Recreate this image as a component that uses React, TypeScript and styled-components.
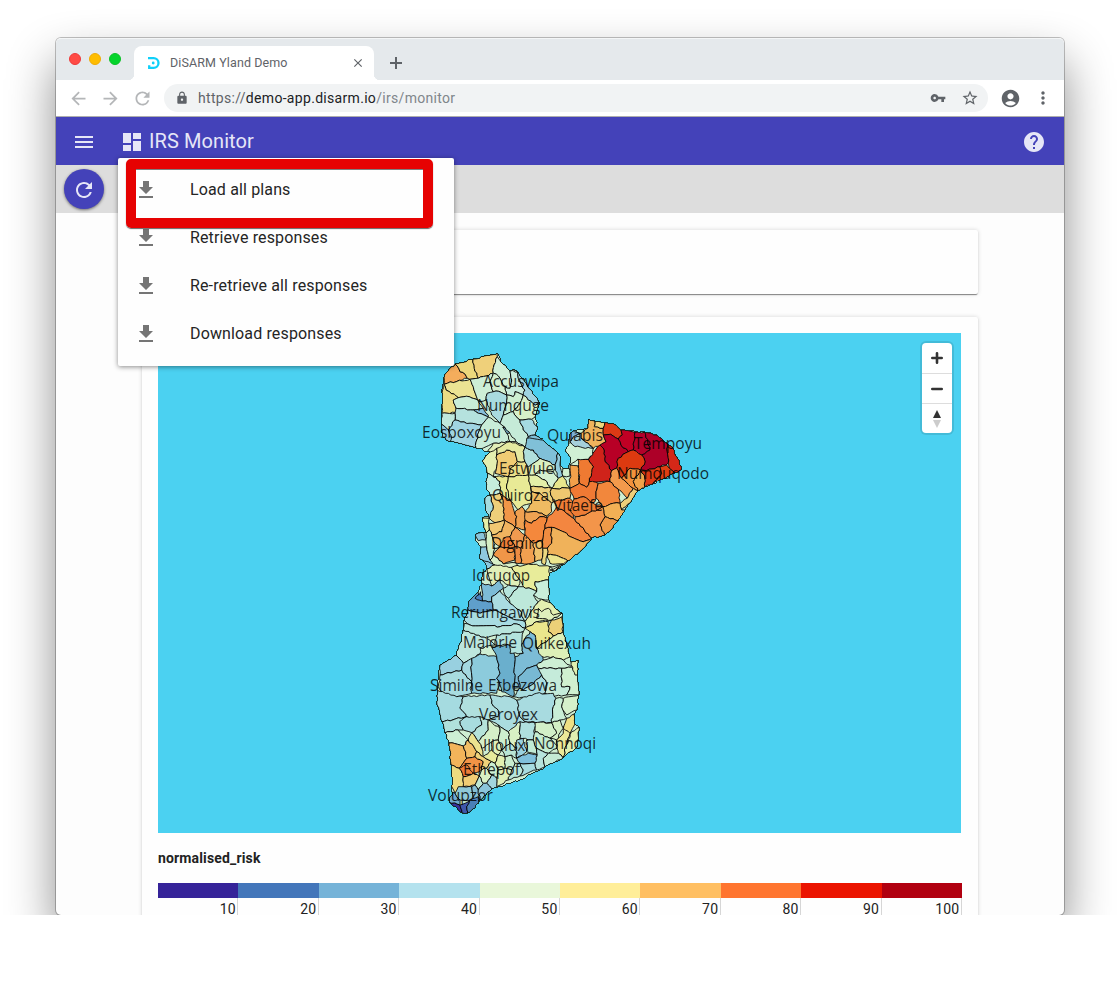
import React from "react";
import styled, { createGlobalStyle } from "styled-components";
import {
  MdAccountCircle,
  MdArrowBack,
  MdArrowForward,
  MdClose,
  MdDashboard,
  MdHelp,
  MdLock,
  MdMenu,
  MdMoreVert,
  MdRefresh,
  MdStarBorder,
  MdVpnKey,
} from "react-icons/md";

const GlobalStyle = createGlobalStyle`
  * { box-sizing: border-box; }
  body { margin: 0; background: #fff; font-family: Roboto, "Liberation Sans", sans-serif; }
  svg { display: block; flex: none; }
`;

const Stage = styled.div`
  height: 915px;
  padding: 38px 56px 0;
  overflow: hidden;
`;
const Window = styled.div`
  position: relative;
  display: flex;
  flex-direction: column;
  width: 1008px;
  height: 877px;
  border-radius: 5px;
  background: #fdfdfd;
  box-shadow: 0 0 0 1px rgba(0, 0, 0, 0.24), 0 24px 48px rgba(0, 0, 0, 0.46);
`;
const TabStrip = styled.div`
  display: flex;
  height: 42px;
  padding-left: 13px;
  border-top: 1px solid #f4f6f7;
  border-radius: 5px 5px 0 0;
  background: #e5e9ec;
`;
const Lights = styled.div`
  display: flex;
  gap: 8px;
  width: 65px;
  padding-top: 14px;
`;
const Light = styled.span<{ $fill: string; $rim: string }>`
  width: 12px;
  height: 12px;
  border-radius: 50%;
  background: ${(p) => p.$fill};
  border: 1px solid ${(p) => p.$rim};
`;
const Tab = styled.div`
  position: relative;
  display: flex;
  align-items: center;
  width: 240px;
  height: 34px;
  margin-top: 7px;
  padding: 0 9px 1px 14px;
  border-radius: 8px 8px 0 0;
  background: #fff;
  &::before,
  &::after {
    content: "";
    position: absolute;
    bottom: 0;
    width: 6px;
    height: 6px;
  }
  &::before {
    left: -6px;
    background: radial-gradient(circle at 0 0, transparent 6px, #fff 6.5px);
  }
  &::after {
    right: -6px;
    background: radial-gradient(circle at 100% 0, transparent 6px, #fff 6.5px);
  }
`;
const TabTitle = styled.span`
  flex: 1;
  margin-left: 10px;
  font-size: 12.5px;
  letter-spacing: 0.1px;
  color: #5f6368;
`;
const NewTab = styled.div`
  padding: 18px 0 0 16px;
`;
const Toolbar = styled.div`
  display: flex;
  align-items: center;
  height: 37px;
  padding: 0 11px;
  border-bottom: 1px solid #aeaeae;
  background: #fff;
  color: #5f6368;
`;
const NavButtons = styled.div`
  display: flex;
  gap: 11px;
  width: 97px;
  padding-left: 0.5px;
  color: #b4b6b8;
`;
const Address = styled.div`
  display: flex;
  flex: none;
  align-items: center;
  width: 824px;
  height: 28px;
  padding: 0 9px 0 11px;
  border-radius: 14px;
  background: #f1f3f4;
`;
const Url = styled.span`
  flex: 1;
  margin-left: 9px;
  font-size: 14px;
  letter-spacing: 0.31px;
  color: #5f6368;
`;
const Host = styled.span`
  color: #202124;
`;
const UrlPath = styled.span`
  color: #80868b;
`;
const AddressActions = styled.div`
  display: flex;
  align-items: center;
  gap: 15px;
`;
const BrowserActions = styled.div`
  display: flex;
  flex: none;
  align-items: center;
  gap: 12px;
  margin-left: 11.5px;
`;
const AppBar = styled.header`
  display: flex;
  align-items: center;
  height: 48px;
  padding: 2px 18px 0 16px;
  background: #4442b9;
  color: #e6e6f7;
`;
const AppTitle = styled.h1`
  flex: 1;
  margin: 0 0 2px 5px;
  font-size: 20px;
  font-weight: 400;
  letter-spacing: 0.09px;
`;
const MenuSlot = styled.div`
  width: 48px;
`;
const ActionBar = styled.div`
  height: 48px;
  padding: 4px 8px;
  background: #ddd;
`;
const RoundButton = styled.button`
  display: flex;
  align-items: center;
  justify-content: center;
  width: 40px;
  height: 40px;
  padding: 2px 0 0;
  border: 0;
  border-radius: 50%;
  background: #4442b9;
  color: #e6e6f7;
  box-shadow: 0 1px 3px rgba(0, 0, 0, 0.5);
`;
const Content = styled.main`
  display: flex;
  flex: 1;
  flex-direction: column;
  gap: 23px;
  min-height: 0;
  padding: 17px 86px 0;
  overflow: hidden;
  border-radius: 0 0 5px 5px;
`;
const Card = styled.section<{ $height: number }>`
  flex: none;
  height: ${(p) => p.$height}px;
  padding: 16px;
  border-radius: 2px;
  background: #fefefe;
  box-shadow: 0 2px 1px -1px rgba(0, 0, 0, 0.3), 0 1px 1px rgba(0, 0, 0, 0.2), 0 0 4px rgba(0, 0, 0, 0.16);
`;
const MapFrame = styled.div`
  position: relative;
  width: 803px;
  height: 500px;
  background: #4bd1f1;
`;
const MapControls = styled.div`
  position: absolute;
  top: 10px;
  right: 9px;
  width: 30px;
  border-radius: 4px;
  background: #fff;
  box-shadow: 0 0 0 2px rgba(0, 0, 0, 0.1);
`;
const MapControl = styled.div`
  display: flex;
  align-items: center;
  justify-content: center;
  height: 30px;
  & + & { border-top: 1px solid #ddd; }
`;
const LegendTitle = styled.h2`
  margin: 17px 0 16px;
  font-size: 14px;
  line-height: 17px;
  font-weight: 700;
  letter-spacing: 0.15px;
  color: #222;
`;
const Legend = styled.div`
  display: grid;
  grid-template-columns: repeat(10, 80.4px);
`;
const LegendCell = styled.div<{ $color: string }>`
  height: 42px;
  padding: 6px 2.5px 0 0;
  border-top: 15px solid ${(p) => p.$color};
  background: linear-gradient(#d6d6d6, #d6d6d6) right / 1px 100% no-repeat;
  font-size: 14px;
  line-height: 11px;
  letter-spacing: 0.2px;
  text-align: right;
  color: #222;
`;
const Menu = styled.ul`
  position: absolute;
  top: 120px;
  left: 62px;
  width: 336px;
  height: 208px;
  margin: 0;
  padding: 8px 0;
  border-radius: 2px;
  background: #fefefe;
  box-shadow: 0 1px 5px rgba(0, 0, 0, 0.45);
  list-style: none;
`;
const MenuItem = styled.li`
  display: flex;
  align-items: center;
  gap: 32px;
  height: 48px;
  padding-left: 16px;
  font-size: 16px;
  letter-spacing: 0.14px;
  color: #252525;
`;
const MenuLabel = styled.span`
  padding-bottom: 2px;
`;
const Highlight = styled.div`
  position: absolute;
  top: 121px;
  left: 70px;
  width: 307px;
  height: 69px;
  border: 10px solid #e60202;
  border-radius: 5px;
  box-shadow: 0 1px 1px rgba(0, 0, 0, 0.6), inset 0 1px 0 rgba(0, 0, 0, 0.5);
`;

type Area = [string, string];
type Sheet = { x: number; y: number; areas: Area[] };

// District shapes by map sheet; coordinates are thirds of a pixel from the sheet's corner.
const sheets: Sheet[] = [
  {
    x: 410,
    y: 340,
    areas: [
      ["#f4ad5c", "135,72 150,95 165,102 172,115 148,121 112,130 102,133 104,110 120,85"],
      ["#ecd87c", "135,72 190,58 193,85 205,115 180,118 172,115 165,102 150,95"],
      ["#efd07a", "190,58 262,40 262,50 252,75 250,100 205,115 193,85"],
      ["#d0efd8", "262,50 278,72 300,93 305,120 300,145 285,140 265,108 250,100 252,75"],
      ["#c8ebdb", "300,93 318,95 325,115 345,150 340,165 315,155 310,170 290,165 285,140 300,145 305,120"],
      ["#ebe393", "102,133 112,130 148,121 180,118 190,140 203,180 178,170 145,173 118,155 108,150"],
      ["#ecdc84", "102,133 108,150 118,155 145,173 130,180 138,205 143,218 95,220 98,160"],
      ["#c9edd8", "145,173 178,170 203,180 220,205 190,210 138,205 130,180"],
      ["#cdeed6", "180,118 205,115 250,100 240,125 250,155 232,160 228,180 210,185 203,180 190,140"],
      ["#d4efd0", "250,100 265,108 285,140 290,165 285,165 258,153 250,155 240,125"],
      ["#a9dbe0", "232,160 258,153 285,165 290,190 280,225 270,250 245,225 228,180"],
      ["#cdeed0", "290,165 310,170 315,155 340,165 330,190 310,215 280,225 290,190 285,165"],
      ["#d7f0c8", "340,165 355,180 375,195 390,190 375,230 365,238 330,240 310,215 330,190"],
      ["#9fd3e0", "308,90 320,92 335,105 345,130 390,190 375,195 355,180 340,165 345,150 325,115 318,95"],
      ["#88bfdb", "190,210 220,205 235,225 235,232 205,220"],
      ["#b5e2de", "138,205 190,210 205,220 235,232 215,255 180,250 135,240 135,220"],
      ["#c0e8dc", "95,220 135,220 135,240 115,270 93,253"],
      ["#a0d4e2", "135,240 180,250 215,255 200,300 197,325 120,305 115,270"],
      ["#8ec7dc", "93,253 115,270 125,290 120,305 97,290"],
      ["#c8ecd8", "235,232 270,250 285,262 290,280 300,305 250,310 200,335 197,325 200,300 215,255"],
      ["#78b4cf", "278,262 300,265 298,280 288,280"],
      ["#c5ebd8", "280,225 310,215 330,240 340,270 355,290 345,322 318,305 285,262 270,250"],
      ["#a5dae2", "330,240 365,238 385,265 375,285 355,290 340,270"],
      ["#80c0d8", "355,290 375,285 400,300 445,340 440,365 400,350 350,322"],
      ["#e2efb8", "250,310 300,305 318,305 345,322 325,330 290,330 260,345 255,390 222,390 215,362 235,330"],
    ],
  },
  {
    x: 460,
    y: 440,
    areas: [
      ["#e4efb0", "65,62 90,35 110,25 115,45 110,80 100,110 80,100 75,75"],
      ["#f0cc74", "115,45 140,30 165,35 172,65 150,90 145,110 105,100 110,80"],
      ["#e5e9a0", "110,25 150,10 195,22 190,35 195,65 172,65 165,35 140,30 115,45"],
      ["#ebe08a", "172,65 195,65 205,82 205,105 145,110 150,90"],
      ["#b0dfdc", "195,22 220,30 240,55 205,82 195,65 190,35"],
      ["#80c0d8", "200,-5 245,0 293,45 285,75 240,55 220,30 195,22"],
      ["#92cbdd", "285,75 293,45 302,50 300,75 308,108 310,120 295,115"],
      ["#dcf0c0", "205,82 240,55 285,75 280,95 240,90 225,105 205,105"],
      ["#d5f0d0", "240,90 280,95 295,115 275,145 255,120 225,105"],
      ["#d2f0d0", "305,85 330,85 330,108 310,112"],
      ["#c5eddc", "80,100 100,110 120,125 120,160 90,165 78,140"],
      ["#e9e890", "100,110 145,110 140,135 150,180 120,160 120,125"],
      ["#e8ea96", "145,110 205,105 212,140 215,190 185,200 175,210 150,180 140,135"],
      ["#e4efa8", "205,105 225,105 255,120 275,145 245,140 212,145"],
      ["#e8e68c", "275,145 295,115 310,112 330,145"],
      ["#edd07c", "212,145 245,140 275,145 272,165 280,185 275,190 240,160 215,155"],
      ["#efc870", "275,150 330,145 333,160 330,175 280,185 272,165"],
      ["#efbb62", "215,155 240,160 275,190 275,215 260,228 230,215 195,215 215,190"],
      ["#eecf7a", "90,165 120,160 130,190 133,240 105,248 88,235 100,200"],
      ["#f19648", "120,160 150,180 170,230 165,262 133,240 130,190"],
      ["#f0a050", "165,215 185,200 195,215 195,270 165,262 170,230"],
      ["#efa252", "195,215 230,215 260,228 262,235 240,230 215,250 195,240"],
      ["#f4883c", "195,240 215,250 240,230 262,235 255,265 248,300 220,310 195,285"],
      ["#f08c40", "255,265 275,262 275,310 262,325 248,325 248,300"],
      ["#f38640", "262,235 290,200 320,220 345,240 395,295 370,305 275,262 255,265"],
      ["#f0b25a", "275,262 370,305 395,295 365,330 325,362 280,345 262,345 262,325 275,310"],
      ["#ee7d36", "280,185 330,175 345,195 340,235 320,220 290,200"],
      ["#ece58e", "262,345 280,345 325,362 310,372 270,370"],
      ["#d5f2d0", "270,380 310,372 285,395"],
      ["#f0c873", "88,250 105,248 133,240 125,275 95,285 88,270"],
      ["#e6f0a8", "65,235 88,235 88,270 78,275"],
      ["#a5dce0", "75,175 90,165 100,200 88,235 75,210"],
      ["#8ac5da", "45,285 70,275 78,300 55,302"],
      ["#8fc8de", "62,320 80,320 90,360 105,385 75,370 58,350"],
      ["#d5efc4", "78,275 88,270 95,285 105,310 100,345 88,355 80,320 78,300"],
      ["#f0b460", "95,285 125,275 133,240 165,262 150,290 120,320 105,310"],
      ["#ee7e38", "120,320 130,295 150,290 165,320 150,325"],
      ["#f19a50", "165,262 195,285 183,325 165,320 150,290"],
      ["#f09648", "120,320 150,325 165,320 165,360 130,372 100,345 105,335"],
      ["#ec8b42", "165,320 183,325 183,370 165,368 165,340"],
      ["#f2a050", "183,325 195,285 220,310 225,365 205,372 183,370"],
      ["#f0c26c", "220,310 248,300 248,325 245,360 225,365"],
      ["#ecd880", "248,325 262,325 262,345 255,375 245,370 245,360"],
      ["#d8f0c8", "105,385 88,355 100,345 130,372 165,368 175,380 140,410 100,410"],
    ],
  },
  {
    x: 550,
    y: 400,
    areas: [
      ["#efb35d", "115,57 135,62 133,80 160,85 160,105 168,125 130,145 93,115 93,100 115,85"],
      ["#eed67d", "135,62 163,65 160,85 133,80"],
      ["#dd3a15", "163,65 185,70 213,90 217,105 205,117 182,103 160,105 160,85"],
      ["#b80026", "160,105 182,103 205,117 213,135 235,155 205,175 200,205 185,212 165,185 160,145 150,135 168,125"],
      ["#c00024", "213,90 240,92 255,97 250,150 235,155 213,135 205,117 217,105"],
      ["#b3002a", "255,97 285,95 300,150 275,165 250,150"],
      ["#ad0028", "285,95 320,105 350,130 355,190 330,200 290,212 272,210 285,185 275,165 300,150"],
      ["#d52818", "350,130 370,145 395,208 375,220 358,205 355,190"],
      ["#dd3a10", "205,175 235,155 250,150 275,165 285,185 272,210 240,205 215,235 200,205"],
      ["#d0231a", "115,178 150,135 160,145 165,185 185,212 180,245 118,245 130,200"],
      ["#ef7a32", "83,178 115,178 130,200 118,245 110,262 88,250"],
      ["#f2a04a", "60,195 83,197 88,250 63,262"],
      ["#d0f0d4", "55,130 93,115 130,145 128,165 115,178 83,178 60,195 60,170 45,150"],
      ["#a6d0db", "60,125 70,110 93,100 93,115 115,130 130,145 75,140"],
      ["#7fb0d2", "55,105 70,93 93,100 70,110 60,125"],
      ["#f39a4c", "185,212 200,205 215,235 250,265 232,295 205,268 180,245"],
      ["#f2923c", "240,205 272,210 250,245 265,270 250,265 215,235"],
      ["#f0a44a", "272,210 283,225 283,262 265,270 250,245"],
      ["#dc3a14", "290,212 330,200 335,220 310,250 283,262 283,225 272,210"],
      ["#df3f12", "330,200 350,195 358,205 375,220 340,235 310,250 335,220"],
      ["#f07a34", "63,262 88,250 110,262 118,245 145,250 138,275 138,295 130,310 100,290 72,297"],
      ["#f2873c", "145,250 180,245 205,268 210,310 190,310 158,320 138,295 138,275"],
      ["#eed07a", "232,295 250,265 262,272 240,310 215,330 210,310"],
      ["#f2b055", "190,310 210,310 215,330 230,325 205,362 165,350 158,320"],
      ["#ee9a47", "165,350 205,362 185,390 165,403 150,375"],
      ["#f3954a", "75,350 105,345 158,320 165,350 150,375 165,403 125,412 80,362"],
      ["#ee7d36", "72,297 100,290 130,310 158,320 105,345 75,350 60,330"],
    ],
  },
  {
    x: 420,
    y: 560,
    areas: [
      ["#8dc8dd", "185,0 205,5 225,15 205,30 195,20"],
      ["#e0efb8", "205,30 225,15 275,22 300,60 295,80 265,75 240,60 215,78"],
      ["#e8ec9a", "275,22 320,12 390,20 388,60 345,65 350,95 310,80 300,60"],
      ["#d0f0d8", "390,30 435,10 405,35"],
      ["#c9eedb", "345,65 388,60 388,120 365,118 340,105 350,95"],
      ["#7dbbd6", "185,65 215,78 240,60 250,85 240,92 215,110 215,125 187,123"],
      ["#5f9fcb", "145,125 175,95 187,123 215,125 220,150 180,160 145,150"],
      ["#4a83bf", "165,115 182,95 187,123"],
      ["#aadce2", "215,125 215,110 240,92 270,130 300,150 315,185 290,180 220,150"],
      ["#b5e4dc", "250,85 265,75 295,80 265,115 255,105"],
      ["#bde8da", "265,115 295,80 310,80 350,95 340,105 355,125 330,160 315,185 300,150 270,130"],
      ["#e3efb0", "355,125 365,118 400,135 425,160 395,180 350,185 315,205 315,185 330,160"],
      ["#e0f0bc", "355,145 365,155 385,145 400,165 425,160 395,180 350,175"],
      ["#ecd078", "385,200 395,180 425,170 430,215 400,228 385,215"],
      ["#ebe68c", "310,205 350,185 385,185 385,215 400,228 350,265 345,225 330,215"],
      ["#ddf0b8", "355,290 350,265 400,228 430,215 450,290 430,300 400,290"],
      ["#a8dce2", "145,150 180,160 220,150 290,180 315,185 310,205 290,192 240,200 150,195 133,180"],
      ["#b8e5dc", "133,190 150,195 240,200 290,192 310,205 310,215 230,225 200,235 130,210"],
      ["#bde6dd", "130,210 200,235 225,255 180,265 180,282 130,310 108,285 120,250"],
      ["#98d0e0", "108,285 130,310 125,330 60,345 60,315 85,300"],
      ["#a8dce0", "60,345 125,330 155,365 150,385 155,400 110,410 90,425 55,380"],
      ["#a4d8e0", "125,330 130,310 155,295 155,365"],
      ["#8ccbdc", "155,295 180,282 230,290 240,340 230,355 240,375 230,400 155,400 155,365"],
      ["#6aafcd", "215,260 270,255 285,290 283,385 280,410 245,395 240,375 230,355 240,340 230,290"],
      ["#b3e3dd", "225,255 230,225 310,215 305,255 310,280 270,280 270,255"],
      ["#7cbcd6", "310,280 305,255 330,215 345,225 350,265 370,300 350,315 320,325 295,350 300,385 283,385 285,290"],
      ["#78b9d4", "295,350 320,325 350,315 365,345 335,375 310,390 300,385"],
      ["#a9dce0", "300,385 310,390 335,375 365,345 380,370 375,400 340,410 315,415 280,410"],
      ["#cdefd4", "350,315 370,300 400,290 430,300 455,322 425,325 355,325"],
      ["#c5ebda", "355,325 425,325 425,380 450,380 440,405 400,410 375,400 380,370 365,345"],
      ["#d0f0d0", "425,325 455,322 470,350 475,400 440,405 450,380 425,380"],
      ["#e0efb0", "450,310 475,300 475,345 465,345"],
    ],
  },
  {
    x: 420,
    y: 690,
    areas: [
      ["#a5dbe0", "50,0 110,20 130,20 120,55 140,80 65,95 50,45"],
      ["#b0e0de", "130,20 210,15 215,40 235,60 235,80 205,90 140,80 120,55"],
      ["#aadcdf", "210,15 270,20 290,30 300,80 315,95 265,125 235,105 205,90 235,80 235,60 215,40"],
      ["#a8dbe0", "290,30 350,10 400,10 408,25 400,50 395,98 315,95 300,80"],
      ["#c9eed6", "408,25 430,25 425,50 440,85 420,90 395,98 400,50"],
      ["#d6f0cb", "430,25 480,15 470,60 440,75 425,50"],
      ["#b0e1dc", "65,95 140,80 120,95 130,120 115,120 75,130"],
      ["#a8dcdf", "140,80 180,80 185,105 155,128 130,120 120,95"],
      ["#cdefd4", "75,130 115,120 145,150 130,168 85,160"],
      ["#b5e3da", "180,80 205,90 205,120 175,155 155,128 185,105"],
      ["#d5f0c8", "205,90 240,115 235,150 215,155 185,175 175,155 205,120"],
      ["#cdefcf", "235,105 265,125 270,160 245,180 235,150 240,115"],
      ["#d8f0c4", "265,125 300,95 300,145 290,175 270,160"],
      ["#b0e0de", "300,95 345,98 340,150 300,145"],
      ["#d2efc8", "345,98 395,98 410,130 390,145 345,125"],
      ["#c5ecd0", "345,125 390,145 415,170 385,190 350,175 340,150"],
      ["#d4efc4", "395,98 420,90 430,115 410,150 390,145 410,130"],
      ["#ebe898", "430,110 440,100 450,130 440,165 430,205 415,190 410,150 430,130"],
      ["#eee084", "440,85 462,72 465,100 450,130 430,110"],
      ["#e0efb0", "455,125 475,110 470,170 430,205 440,165"],
      ["#f2b45a", "88,160 130,168 140,205 118,235 93,230"],
      ["#f2be66", "130,168 145,150 170,185 165,200 140,205"],
      ["#ebe38f", "145,150 155,128 175,155 185,175 190,200 170,185"],
      ["#f29346", "140,205 165,200 190,215 185,240 160,250 118,235"],
      ["#efd27a", "170,185 190,200 215,215 200,235 185,240 190,215 165,200"],
      ["#eddb80", "93,230 118,235 130,260 130,290 105,310 95,290"],
      ["#ee7d38", "118,235 140,225 155,250 130,260"],
      ["#f0cc74", "130,260 155,250 178,258 165,285 135,290"],
      ["#c0e8d2", "165,285 178,258 190,280 175,300"],
      ["#d8f0c4", "185,240 200,235 215,255 200,280 190,280 178,258"],
      ["#e6ea9b", "190,200 215,180 235,195 225,220 215,215"],
      ["#dff0b8", "215,155 235,150 245,180 235,195 215,180"],
      ["#e2efb0", "225,220 235,195 255,200 255,235 235,240"],
      ["#cbeed2", "200,235 215,215 225,220 235,240 230,265 215,255"],
      ["#c8eccf", "255,200 275,195 285,220 275,240 255,235"],
      ["#dff0b8", "235,240 255,235 275,240 265,270 230,290 230,265"],
      ["#b8e5d5", "245,180 270,160 290,175 290,205 275,195 255,200"],
      ["#9bd1df", "290,150 310,145 320,185 290,205"],
      ["#c2ead4", "320,150 340,150 350,175 352,195 320,185"],
      ["#80c0dc", "290,205 325,190 352,195 345,220 300,220"],
      ["#b9e5d8", "275,240 285,220 300,220 310,240 300,258 265,270"],
      ["#a8dce0", "300,220 345,220 350,240 300,258 310,240"],
      ["#b7e4dc", "350,175 385,190 370,205 375,230 350,240 345,220 352,195"],
      ["#c5ebd5", "385,190 415,190 430,205 375,230 370,205"],
      ["#a2d5dd", "215,255 230,265 230,290 215,297 200,280"],
      ["#8fc9d8", "115,290 135,290 155,290 160,330 120,330 105,310"],
      ["#86bfd4", "155,290 165,285 175,300 180,330 160,330"],
      ["#37309a", "88,335 120,345 125,370"],
      ["#3f56aa", "120,345 150,330 140,350 145,368 125,370"],
      ["#4a7fb8", "150,330 175,320 175,345 145,368 140,350"],
      ["#6ea8ce", "93,310 105,310 120,330 120,345 88,335"],
      ["#8bc5da", "175,300 190,280 200,280 215,297 180,330"],
    ],
  },
];

const coast =
  "455,364 473,359 497,353 503,364 510,371 513,369 518,372 525,382 540,403 535,417 538,428 535,435 543,440 558,453 561,457 560,465 563,468 569,468 570,457 565,450 568,446 569,435 573,431 581,430 588,428 588,419 595,421 605,422 612,423 621,430 630,431 645,432 657,435 667,443 673,448 682,469 675,473 663,479 645,487 638,491 630,503 618,521 611,530 605,535 592,538 582,550 568,561 555,571 550,573 549,580 549,600 553,605 562,613 563,632 570,657 571,662 578,660 578,675 579,695 577,710 574,714 575,724 579,727 577,747 563,758 520,780 492,789 480,800 475,808 468,813 462,813 449,802 452,792 451,765 449,743 445,733 442,722 437,705 437,690 438,680 440,665 448,660 456,655 460,643 463,630 464,620 468,610 468,602 478,592 482,583 482,573 487,569 485,563 479,557 481,547 476,541 475,535 483,532 486,533 482,518 489,516 485,510 485,498 490,495 486,487 487,473 485,465 482,461 490,452 476,448 450,442 442,436 441,424 442,393 444,377 450,368";

type Point = [number, number];
const known: Point[] = [];

function parse(text: string): Point[] {
  return text.split(" ").map((p) => p.split(",").map(Number) as Point);
}
// Borders drawn by two districts join at one common corner.
function snap([x, y]: Point): Point {
  const near = known.find(([a, b]) => Math.hypot(a - x, b - y) < 2.2);
  if (near) return near;
  known.push([x, y]);
  return [x, y];
}
// Bends a straight border; both neighbours get the same bend.
function wiggle(a: Point, b: Point): Point[] {
  const flip = a[0] > b[0] || (a[0] === b[0] && a[1] > b[1]);
  const [s, e] = flip ? [b, a] : [a, b];
  const len = Math.hypot(e[0] - s[0], e[1] - s[1]);
  const n = Math.floor(len / 2.6);
  const out: Point[] = [];
  for (let i = 1; i < n; i++) {
    const t = i / n;
    const r = Math.sin(s[0] * 12.9 + e[1] * 78.2 + i * 37.7) * 4375.5;
    const d = (r - Math.floor(r) - 0.5) * 1.7;
    out.push([
      s[0] + (e[0] - s[0]) * t - ((e[1] - s[1]) / len) * d,
      s[1] + (e[1] - s[1]) * t + ((e[0] - s[0]) / len) * d,
    ]);
  }
  return flip ? out.reverse() : out;
}
function toPath(points: Point[]): string {
  const all = points.flatMap((p, i) => [p, ...wiggle(p, points[(i + 1) % points.length])]);
  return "M" + all.map(([x, y]) => `${x.toFixed(1)} ${y.toFixed(1)}`).join("L") + "Z";
}

const coastPath = toPath(parse(coast).map(snap));
const districts = sheets.flatMap((sheet) =>
  sheet.areas.map(([fill, pts]) => ({
    fill,
    d: toPath(parse(pts).map(([x, y]) => snap([sheet.x + x / 3, sheet.y + y / 3]))),
  })),
);

const places: [string, number, number, number][] = [
  ["Accuswipa", 483, 387, 76],
  ["Numquge", 477, 411, 72],
  ["Eosboxoyu", 422, 438, 79],
  ["Quiabis", 547, 441, 56],
  ["Tempoyu", 634, 449, 68],
  ["Numquqodo", 617, 479, 92],
  ["Estwule", 499, 474, 55],
  ["Quiroza", 492, 501, 57],
  ["Vitaefe", 553, 511, 50],
  ["Digniro", 491, 549, 53],
  ["Idcuqop", 472, 581, 58],
  ["Rerumgawis", 451, 618, 89],
  ["Maiorle", 463, 648, 54],
  ["Quikexuh", 522, 649, 69],
  ["Similne", 430, 691, 53],
  ["Etbezowa", 488, 691, 69],
  ["Veroyex", 479, 720, 59],
  ["Illoluxi", 483, 751, 46],
  ["Nonnoqi", 534, 749, 62],
  ["Ethepof", 463, 775, 57],
  ["Volupzor", 428, 801, 65],
];

const legend: [string, number][] = [
  ["#352399", 10],
  ["#4376ba", 20],
  ["#75b3d8", 30],
  ["#b4e2ee", 40],
  ["#e9f7da", 50],
  ["#ffee99", 60],
  ["#ffbf62", 70],
  ["#ff752f", 80],
  ["#eb1400", 90],
  ["#b10010", 100],
];

const RiskMap = () => (
  <svg width="803" height="500" viewBox="158 333 803 500">
    <clipPath id="land">
      <path d={coastPath} />
    </clipPath>
    <g clipPath="url(#land)" shapeRendering="crispEdges">
      <path d={coastPath} fill="#cfeed2" />
      {districts.map((a, i) => (
        <path key={i} d={a.d} fill={a.fill} stroke="#0a0a0a" strokeWidth="0.9" strokeLinejoin="round" />
      ))}
    </g>
    <path d={coastPath} fill="none" stroke="#10251c" strokeWidth="0.9" shapeRendering="crispEdges" />
    <g fontFamily='"Open Sans", "Noto Sans", sans-serif' fontSize="16" fill="#000" fillOpacity="0.82">
      {places.map(([name, x, y, w]) => (
        <text key={name} x={x} y={y} textLength={w} lengthAdjust="spacingAndGlyphs">
          {name}
        </text>
      ))}
    </g>
  </svg>
);

const DownloadIcon = () => (
  <svg width="24" height="24" viewBox="0 0 24 24" fill="#757575">
    <path d="M19 9h-4V3H9v6H5l7 7 7-7zM5 18v2h14v-2H5z" />
  </svg>
);

const PlusIcon = () => (
  <svg width="12" height="12" viewBox="0 0 12 12" stroke="#5f6368" strokeWidth="2">
    <path d="M6 0v12M0 6h12" />
  </svg>
);

const Logo = () => (
  <svg width="12" height="14" viewBox="0 0 12 14" fill="none" stroke="#0fd0fa" strokeWidth="2.3">
    <path d="M0 2.1h5.6a4.9 4.9 0 0 1 0 9.8H1.2V9.2" />
    <circle cx="5.2" cy="7" r="1.4" fill="#0fd0fa" stroke="none" />
  </svg>
);

export default function App() {
  return (
    <>
      <GlobalStyle />
      <Stage>
        <Window>
          <TabStrip>
            <Lights>
              <Light $fill="#ff4b45" $rim="#ee3a3a" />
              <Light $fill="#ffbd00" $rim="#efab05" />
              <Light $fill="#04d42c" $rim="#0bc127" />
            </Lights>
            <Tab>
              <Logo />
              <TabTitle>DiSARM Yland Demo</TabTitle>
              <MdClose size={14} color="#5f6368" />
            </Tab>
            <NewTab>
              <PlusIcon />
            </NewTab>
          </TabStrip>
          <Toolbar>
            <NavButtons>
              <MdArrowBack size={21} />
              <MdArrowForward size={21} />
              <MdRefresh size={21} />
            </NavButtons>
            <Address>
              <MdLock size={14} />
              <Url>
                https://<Host>demo-app.disarm.io</Host>
                <UrlPath>/irs/monitor</UrlPath>
              </Url>
              <AddressActions>
                <MdVpnKey size={16} />
                <MdStarBorder size={18} />
              </AddressActions>
            </Address>
            <BrowserActions>
              <MdAccountCircle size={21} />
              <MdMoreVert size={20} />
            </BrowserActions>
          </Toolbar>
          <AppBar>
            <MenuSlot>
              <MdMenu size={24} />
            </MenuSlot>
            <MdDashboard size={24} />
            <AppTitle>IRS Monitor</AppTitle>
            <MdHelp size={24} />
          </AppBar>
          <ActionBar>
            <RoundButton>
              <MdRefresh size={24} />
            </RoundButton>
          </ActionBar>
          <Content>
            <Card $height={64} />
            <Card $height={640}>
              <MapFrame>
                <RiskMap />
                <MapControls>
                  <MapControl>
                    <svg width="12" height="12" viewBox="0 0 12 12" stroke="#333" strokeWidth="2.6" strokeLinecap="round">
                      <path d="M6 1.3v9.4M1.3 6h9.4" />
                    </svg>
                  </MapControl>
                  <MapControl>
                    <svg width="12" height="12" viewBox="0 0 12 12" stroke="#333" strokeWidth="2.6" strokeLinecap="round">
                      <path d="M1.3 6h9.4" />
                    </svg>
                  </MapControl>
                  <MapControl>
                    <svg width="8" height="18" viewBox="0 0 8 18">
                      <path d="M0 8 4 0l4 8z" fill="#333" />
                      <path d="M0 10l4 8 4-8z" fill="#ccc" />
                    </svg>
                  </MapControl>
                </MapControls>
              </MapFrame>
              <LegendTitle>normalised_risk</LegendTitle>
              <Legend>
                {legend.map(([color, value]) => (
                  <LegendCell key={value} $color={color}>
                    {value}
                  </LegendCell>
                ))}
              </Legend>
            </Card>
          </Content>
          <Menu>
            {["Load all plans", "Retrieve responses", "Re-retrieve all responses", "Download responses"].map((label) => (
              <MenuItem key={label}>
                <DownloadIcon />
                <MenuLabel>{label}</MenuLabel>
              </MenuItem>
            ))}
          </Menu>
          <Highlight />
        </Window>
      </Stage>
    </>
  );
}
